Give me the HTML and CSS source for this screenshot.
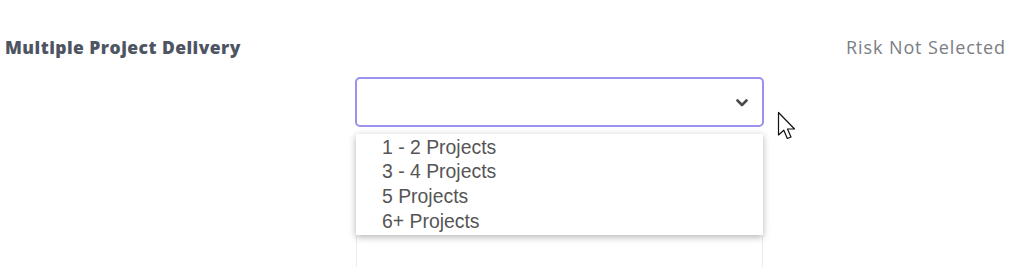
FILE: index.html
```html
<!DOCTYPE html>
<html>
<head>
<meta charset="utf-8">
<link rel="stylesheet" href="styles.css">
</head>
<body>
<div class="page">
  <div class="header">
    <div class="title">Multiple Project Delivery</div>
    <div class="risk">Risk Not Selected</div>
  </div>
  <div class="field">
    <div class="select">
      <svg class="chevron" width="12" height="8" viewBox="0 0 12 8"><path d="M1.5 1.5 L6 6 L10.5 1.5" fill="none" stroke="#4a4a4a" stroke-width="2.6" stroke-linecap="round" stroke-linejoin="round"/></svg>
    </div>
    <div class="below"></div>
    <ul class="menu">
      <li>1 - 2 Projects</li>
      <li>3 - 4 Projects</li>
      <li>5 Projects</li>
      <li>6+ Projects</li>
    </ul>
    <svg class="cursor" width="22" height="32" viewBox="0 0 22 32"><path d="M1.5 1.5 L1.5 24 L6.8 19.2 L10.3 27.5 L14 26 L10.5 18 L17.5 18 Z" fill="#fff" stroke="#111" stroke-width="1.2" stroke-linejoin="round"/></svg>
  </div>
</div>
</body>
</html>
```
FILE: styles.css
```css
* { box-sizing: border-box; }
html, body { margin: 0; padding: 0; background: #fff; }
.page {
  width: 1035px;
  height: 267px;
  overflow: hidden;
  padding-top: 35px;
}
.header {
  display: flex;
  justify-content: space-between;
  align-items: center;
  height: 24px;
  padding: 0 29px 0 5px;
}
.title {
  font-family: "Open Sans", sans-serif;
  font-weight: 800;
  font-size: 17.5px;
  letter-spacing: 0.45px;
  color: #4e5562;
}
.risk {
  font-family: "Open Sans", sans-serif;
  font-weight: 400;
  font-size: 18px;
  letter-spacing: 0.9px;
  color: #7a7d84;
}
.field {
  position: relative;
  margin: 17.5px 0 0 355px;
  width: 409px;
}
.select {
  height: 50px;
  border: 2px solid #9a92ec;
  border-radius: 5px;
  background: #fff;
  display: flex;
  align-items: center;
  justify-content: flex-end;
  padding-right: 14px;
}
.chevron { display: block; margin-top: 2px; }
.below {
  margin: 10px 0 0 1px;
  width: 407px;
  height: 160px;
  border: 1px solid #ececec;
}
.menu {
  position: absolute;
  top: 57.5px;
  left: 1px;
  width: 407px;
  margin: 0;
  padding: 0.5px 0 1.5px 26px;
  list-style: none;
  background: #fff;
  box-shadow: 0 2px 7px rgba(0, 0, 0, 0.3);
  font-family: "Liberation Sans", Arial, sans-serif;
  font-size: 19.4px;
  line-height: 24.7px;
  color: #555;
}
.cursor {
  position: absolute;
  left: 422px;
  top: 34px;
}
```
